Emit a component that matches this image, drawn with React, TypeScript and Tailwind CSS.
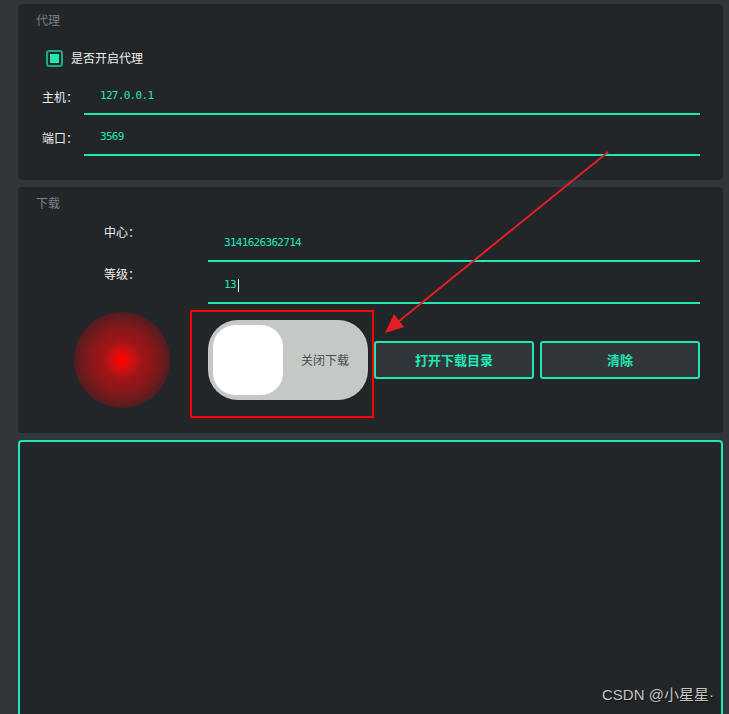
import React from "react";

const cjk = "font-['Noto_Sans_CJK_SC','Noto_Sans',sans-serif]";
const mono = "font-['DejaVu_Sans_Mono','Noto_Sans_CJK_SC',monospace] text-[11px] tracking-[-0.7px] text-[#1ee8b6]";

function Field({ value, caret }: { value: string; caret?: boolean }) {
  return (
    <div className="flex-1 h-[36px] border-b-2 border-[#1ee8b6] flex items-center pl-[16px]">
      <span className={mono}>{value}</span>
      {caret && <span className="w-px h-[13px] bg-[#eff0f1] ml-[2px]"></span>}
    </div>
  );
}

export default function App() {
  return (
    <div className={`relative w-[729px] h-[714px] overflow-hidden bg-[#31363b] pl-[18px] pr-[6px] pt-[4px] flex flex-col gap-[7px] ${cjk}`}>
      {/* 代理 */}
      <div className="h-[176px] shrink-0 rounded-[4px] bg-[#232629] pt-[8px] pb-[24px] pr-[23px] flex flex-col">
        <div className="pl-[18px] text-[12px] leading-[16px] text-[#7b8085]">代理</div>
        <div className="mt-[20px] h-[20px] flex items-center pl-[28px]">
          <div className="w-[17px] h-[17px] rounded-[3px] border-2 border-[#1aa889] p-[2px]">
            <div className="w-full h-full bg-[#1ee8b6]"></div>
          </div>
          <span className="ml-[8px] text-[12px] text-[#eff0f1]">是否开启代理</span>
        </div>
        <div className="mt-[11px] flex items-center">
          <div className="w-[66px] pl-[24px] text-[12px] text-[#eff0f1]">主机：</div>
          <Field value="127.0.0.1" />
        </div>
        <div className="mt-[5px] flex items-center">
          <div className="w-[66px] pl-[24px] text-[12px] text-[#eff0f1]">端口：</div>
          <Field value="3569" />
        </div>
      </div>

      {/* 下载 */}
      <div className="h-[246px] shrink-0 rounded-[4px] bg-[#232629] pt-[8px] pr-[23px] flex flex-col">
        <div className="pl-[18px] text-[12px] leading-[16px] text-[#7b8085]">下载</div>
        <div className="mt-[13px] flex items-start">
          <div className="w-[190px] pl-[86px] text-[12px] leading-[16px] text-[#eff0f1]">中心：</div>
          <div className="flex-1 flex mt-[2px]">
            <Field value="3141626362714" />
          </div>
        </div>
        <div className="mt-[4px] flex items-start">
          <div className="w-[190px] pl-[86px] text-[12px] leading-[16px] text-[#eff0f1]">等级：</div>
          <div className="flex-1 flex mt-[2px]">
            <Field value="13" caret />
          </div>
        </div>
        <div className="mt-[16px] h-[80px] flex items-center">
          <div className="w-[190px] h-[80px] flex items-center pl-[56px]">
            <div className="shrink-0 w-[96px] h-[96px] rounded-full bg-[radial-gradient(circle,#ff0000_0%,#f00505_8%,#c21213_18%,#9c1517_30%,#8c1719_44%,#701a1c_58%,#521d20_70%,#3a2124_82%,#2a2528_92%,#232629_100%)]"></div>
          </div>
          <div className="w-[160px] h-[80px] rounded-[30px] bg-[#c5c9c6] flex items-center pl-[5px]">
            <div className="w-[70px] h-[70px] rounded-[22px] bg-white"></div>
            <span className="ml-[18px] text-[12px] text-[#4a4d50]">关闭下载</span>
          </div>
          <button className="ml-[6px] w-[160px] h-[38px] rounded-[3px] border-2 border-[#1ee8b6] bg-[#31363b] text-[13px] font-bold text-[#1ee8b6]">打开下载目录</button>
          <button className="ml-[6px] w-[160px] h-[38px] rounded-[3px] border-2 border-[#1ee8b6] bg-[#31363b] text-[13px] font-bold text-[#1ee8b6]">清除</button>
        </div>
      </div>

      {/* log area */}
      <div className="h-[290px] shrink-0 rounded-[4px] border-2 border-[#1ee8b6] bg-[#232629]"></div>

      {/* annotation overlay */}
      <div className="absolute left-[190px] top-[310px] w-[184px] h-[108px] border-2 border-[#ff0000]"></div>
      <svg className="absolute left-0 top-0 pointer-events-none" width="729" height="714">
        <line x1="608" y1="152" x2="398" y2="322" stroke="#e41e24" strokeWidth="2" />
        <polygon points="385,333 394,314 404,327" fill="#e41e24" />
      </svg>
      <div className="absolute left-[602px] top-[685px] text-[15px] leading-[20px] text-[#c4c4c4] font-['Liberation_Sans','Noto_Sans_CJK_SC',sans-serif] [text-shadow:1px_1px_1px_#111]">
        CSDN @小星星·
      </div>
    </div>
  );
}
